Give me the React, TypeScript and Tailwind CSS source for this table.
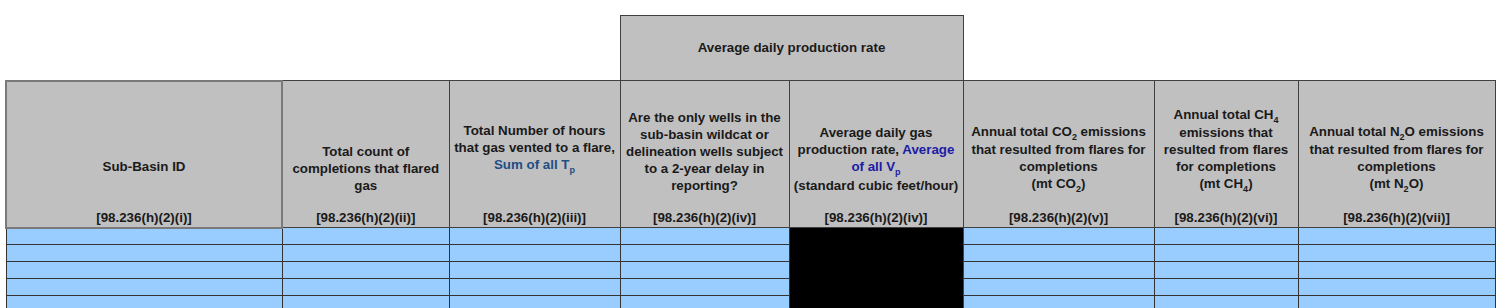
import React from "react";

type Col = {
  width: number;
  cite: string;
  body: React.ReactNode;
  gaps?: number;
};

const Sub = ({ children }: { children: React.ReactNode }) => (
  <span className="align-sub text-[9px] leading-none">{children}</span>
);

const cols: Col[] = [
  { width: 276, cite: "[98.236(h)(2)(i)]", body: <>Sub-Basin ID</>, gaps: 2 },
  {
    width: 167,
    cite: "[98.236(h)(2)(ii)]",
    body: <>Total count of completions that flared gas</>,
  },
  {
    width: 171,
    cite: "[98.236(h)(2)(iii)]",
    gaps: 2,
    body: (
      <>
        Total Number of hours that gas vented to a flare,
        <br />
        <span className="text-[#1f4e85]">
          Sum of all T<Sub>p</Sub>
        </span>
      </>
    ),
  },
  {
    width: 169,
    cite: "[98.236(h)(2)(iv)]",
    body: <>Are the only wells in the sub-basin wildcat or delineation wells subject to a 2-year delay in reporting?</>,
  },
  {
    width: 174,
    cite: "[98.236(h)(2)(iv)]",
    body: (
      <>
        Average daily gas production rate,{" "}
        <span className="text-[#1c1ca6]">
          Average of all V<Sub>p</Sub>
        </span>
        <br />
        (standard cubic feet/hour)
      </>
    ),
  },
  {
    width: 191,
    cite: "[98.236(h)(2)(v)]",
    body: (
      <>
        Annual total CO<Sub>2</Sub> emissions that resulted from flares for completions
        <br />
        (mt CO<Sub>2</Sub>)
      </>
    ),
  },
  {
    width: 144,
    cite: "[98.236(h)(2)(vi)]",
    body: (
      <>
        Annual total CH<Sub>4</Sub> emissions that resulted from flares for completions
        <br />
        (mt CH<Sub>4</Sub>)
      </>
    ),
  },
  {
    width: 197,
    cite: "[98.236(h)(2)(vii)]",
    body: (
      <>
        Annual total N<Sub>2</Sub>O emissions that resulted from flares for completions
        <br />
        (mt N<Sub>2</Sub>O)
      </>
    ),
  },
];

const rows = [0, 1, 2, 3, 4, 5];

export default function App() {
  return (
    <div className="w-[1507px] h-[308px] overflow-hidden bg-white pl-[5px] pt-[15px] font-['Liberation_Sans',Arial,sans-serif] text-[13.33px] font-bold text-[#1a1a1a]">
      <table className="table-fixed border-collapse">
        <colgroup>
          {cols.map((c, i) => (
            <col key={i} style={{ width: c.width }} />
          ))}
        </colgroup>
        <thead>
          <tr className="h-[65px]">
            <th colSpan={3} className="p-0" />
            <th
              colSpan={2}
              className="border border-[#404040] bg-[#c0c0c0] p-0 text-center align-middle font-bold"
            >
              Average daily production rate
            </th>
            <th colSpan={3} className="p-0" />
          </tr>
          <tr className="h-[147px]">
            {cols.map((c, i) => (
              <th
                key={i}
                className={
                  i === 0
                    ? "border-2 border-[#7a7a7a] bg-[#c0c0c0] px-[2px] pb-[1px] align-bottom font-bold leading-[17px]"
                    : "border border-[#404040] bg-[#c0c0c0] px-[2px] pb-[1px] align-bottom font-bold leading-[17px]"
                }
              >
                <div className="flex flex-col items-center text-center">
                  <div>{c.body}</div>
                  <div className={c.gaps === 2 ? "h-[34px]" : "h-[15px]"} />
                  <div>{c.cite}</div>
                </div>
              </th>
            ))}
          </tr>
        </thead>
        <tbody>
          {rows.map((r) => (
            <tr key={r} className="h-[17px]">
              {cols.map((_, i) => (
                <td
                  key={i}
                  className={
                    i === 4
                      ? "border-x border-[#404040] bg-black p-0"
                      : "border border-[#333333] bg-[#99ccff] p-0"
                  }
                />
              ))}
            </tr>
          ))}
        </tbody>
      </table>
    </div>
  );
}
